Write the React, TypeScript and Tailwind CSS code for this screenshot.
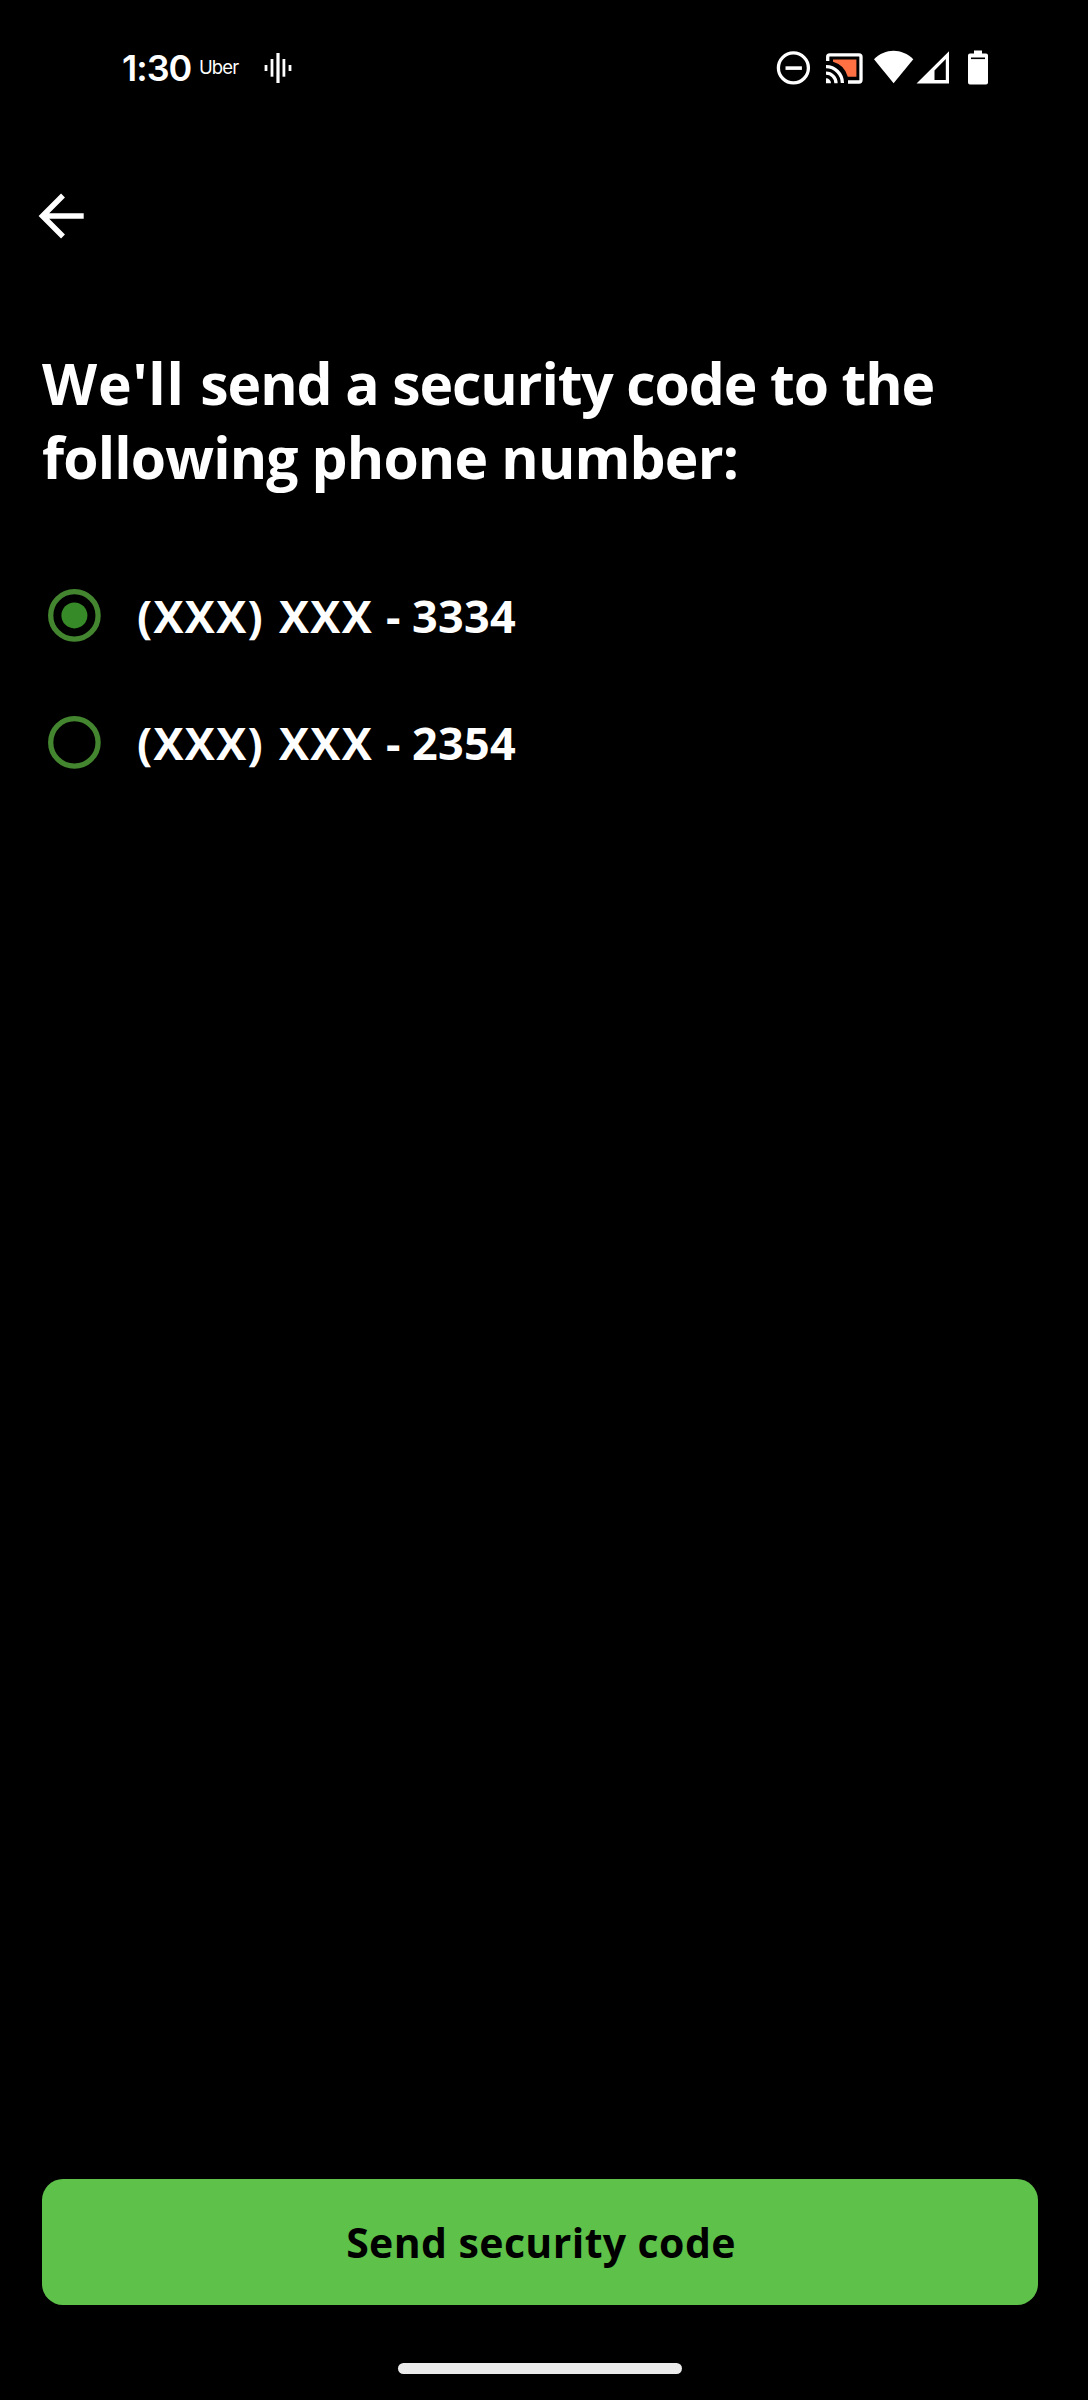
import { useState } from "react";

const PHONES = [
  { mask: "(XXX) XXX", last: "3334" },
  { mask: "(XXX) XXX", last: "2354" },
];

function VoiceIcon() {
  return (
    <svg className="ml-[25px] h-8 w-[30px]" viewBox="263 52 30 32" fill="#fff">
      <rect x="264.6" y="65" width="2.8" height="6" />
      <rect x="270.6" y="59" width="2.8" height="17.7" />
      <rect x="276.4" y="53" width="3.2" height="30" />
      <rect x="282.5" y="59" width="2.8" height="17.7" />
      <rect x="288.6" y="65" width="2.8" height="6" />
    </svg>
  );
}

function StatusIcons() {
  return (
    <svg className="h-9 w-[214px]" viewBox="776 49.5 214 36" fill="none">
      <circle cx="793.4" cy="67.4" r="15" stroke="#fff" strokeWidth="3.3" />
      <path d="M785.5 67.6h16.4" stroke="#fff" strokeWidth="3.6" />
      <path d="M827.7 60.5V56.300a2 2 0 0 1 2-2h29.300a2 2 0 0 1 2 2v23.200a2 2 0 0 1-2 2h-11" stroke="#fff" strokeWidth="3.300" />
      <path d="M833 59h23.400v17.300h-8.600a21.500 21.500 0 0 0-14.800-15z" fill="#ff7043" />
      <path d="M826 66.200a16.400 16.400 0 0 1 16.400 16.400M826 72.700a10 10 0 0 1 10 10" stroke="#fff" strokeWidth="3.300" />
      <path d="M826 77.700a5 5 0 0 1 5 5h-5z" fill="#fff" />
      <path d="M874 58.800C885 47.300 902 47.300 913.300 58.800L893.600 82.700z" fill="#fff" />
      <path d="M949 50.700V83H916.500zM945.800 58.500L934.500 70v9.500h11.300z" fill="#fff" fillRule="evenodd" />
      <path d="M974 50h8v3h4a2 2 0 0 1 2 2v27a2 2 0 0 1-2 2h-16a2 2 0 0 1-2-2V55a2 2 0 0 1 2-2h4z" fill="#fff" />
      <path d="M971 57.800h14" stroke="#000" strokeWidth="1.600" />
    </svg>
  );
}

function RadioMark({ checked }: { checked: boolean }) {
  return (
    <svg className="size-[53px]" viewBox="0 0 53 53" fill="none">
      <circle cx="26.400" cy="26.400" r="23.700" stroke="#43862f" strokeWidth="5.300" />
      {checked && <circle cx="26.400" cy="26.400" r="13" fill="#378a28" />}
    </svg>
  );
}

export default function App() {
  const [selected, setSelected] = useState(0);
  return (
    <div className="flex h-[2400px] w-[1088px] flex-col bg-black font-['Open_Sans','Noto_Sans',sans-serif] text-white">
      <header className="flex h-[135px] items-center justify-between pl-[122px] pr-[98px] font-['Inter',sans-serif]">
        <div className="flex items-center">
          <span className="w-[77px] text-[36px] font-semibold leading-none tracking-[-1px]">1:30</span>
          <span className="w-[39px] whitespace-nowrap text-[18.5px] leading-none tracking-[-0.9px]">Uber</span>
          <VoiceIcon />
        </div>
        <StatusIcons />
      </header>

      <button aria-label="Back" className="ml-9 mt-[55px] h-[52px] w-[50px]">
        <svg viewBox="36 190 50 52" className="h-full w-full" fill="none" stroke="#fff" strokeWidth="5.500">
          <path d="M83.700 216H44M63 195.500L42.500 216L63 236.500" />
        </svg>
      </button>

      <h1 className="ml-[42px] mt-[104px] whitespace-nowrap text-[57px] font-bold leading-[74px] tracking-[-0.85px]">
        <span className="tracking-[-1.1px]">
          <span className="tracking-[0.8px]">We'll </span>send a security code to the
        </span>
        <br />
        following phone number:
      </h1>

      <div className="ml-12 mt-[91px] flex flex-col gap-[67px]" role="radiogroup">
        {PHONES.map((phone, i) => (
          <button
            key={phone.last}
            role="radio"
            aria-checked={selected === i}
            onClick={() => setSelected(i)}
            className="flex h-[60px] items-center text-left"
          >
            <RadioMark checked={selected === i} />
            <span className="ml-9 flex pt-0.5 text-[45px] font-bold leading-[60px]">
              <span className="w-[249px] tracking-[1.3px] [word-spacing:2px]">{phone.mask}</span>
              <span className="w-[26px]">-</span>
              <span className="tracking-[0.3px]">{phone.last}</span>
            </span>
          </button>
        ))}
      </div>

      <div className="mb-[58px] ml-[42px] mt-auto w-[996px]">
        <button className="h-[126px] w-full rounded-[21px] bg-[#5ec14a] pl-0.5 pt-0.5 text-[41px] font-bold tracking-[0.4px] text-black">
          Send security code
        </button>
      </div>
      <div className="mb-[26px] ml-[398px] h-[11px] w-[284px] rounded-full bg-[#ebebeb]" />
    </div>
  );
}
